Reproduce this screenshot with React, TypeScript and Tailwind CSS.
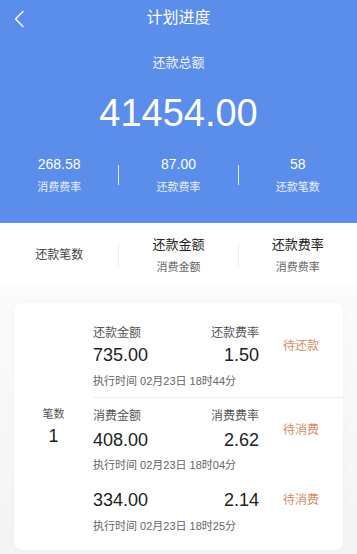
import React from "react";

const FONT = { fontFamily: '"Liberation Sans", "Noto Sans CJK SC", sans-serif' };

function StatCol({ value, label }: { value: string; label: string }) {
  return (
    <div className="flex flex-1 flex-col items-center">
      <div className="text-[14px] leading-[20px] text-white">{value}</div>
      <div className="mt-[5px] text-[11px] leading-[16px] text-[#e8efff]">{label}</div>
    </div>
  );
}

function Row({
  labels,
  amount,
  rate,
  status,
  time,
  valueMt,
  timeMt,
}: {
  labels?: [string, string];
  amount: string;
  rate: string;
  status: string;
  time: string;
  valueMt: string;
  timeMt: string;
}) {
  return (
    <div>
      <div className="flex items-center">
        <div className="flex flex-1">
          <div className="flex flex-1 flex-col">
            {labels && <div className="text-[12px] leading-[16px] text-[#555]">{labels[0]}</div>}
            <div className={`${valueMt} text-[18px] leading-[24px] text-[#222]`}>{amount}</div>
          </div>
          <div className="flex flex-col items-end">
            {labels && <div className="text-[12px] leading-[16px] text-[#555]">{labels[1]}</div>}
            <div className={`${valueMt} text-[18px] leading-[24px] text-[#222]`}>{rate}</div>
          </div>
        </div>
        <div className="w-[84px] text-center text-[12px] leading-[16px] text-[#d98b5f]">{status}</div>
      </div>
      <div className={`${timeMt} text-[11px] leading-[16px] text-[#666]`}>{time}</div>
    </div>
  );
}

export default function App() {
  return (
    <div className="min-h-[554px] w-[357px] bg-[#f5f5f5]" style={FONT}>
      <div className="h-[223px] bg-[#5b8deb]">
        <div className="grid h-[36px] grid-cols-[40px_1fr_40px] items-center">
          <div className="flex items-center pl-[13px] pt-[1px]">
            <svg width="12" height="18" viewBox="0 0 12 18" fill="none">
              <path d="M10 1.5 L2.5 9 L10 16.5" stroke="white" strokeWidth="1.4" strokeLinecap="round" strokeLinejoin="round" />
            </svg>
          </div>
          <div className="text-center text-[16px] leading-[22px] text-white">计划进度</div>
          <div />
        </div>
        <div className="mt-[18px] text-center text-[13px] leading-[18px] text-[#eef3ff]">还款总额</div>
        <div className="mt-[19px] text-center text-[38px] leading-[44px] text-white">41454.00</div>
        <div className="mt-[19px] flex items-start">
          <StatCol value="268.58" label="消费费率" />
          <div className="mt-[11px] h-[20px] w-px bg-[#dfe8fb]" />
          <StatCol value="87.00" label="还款费率" />
          <div className="mt-[11px] h-[20px] w-px bg-[#dfe8fb]" />
          <StatCol value="58" label="还款笔数" />
        </div>
      </div>

      <div className="flex h-[64px] items-center bg-white">
        <div className="flex flex-1 justify-center text-[12px] leading-[16px] text-[#444]">还款笔数</div>
        <div className="h-[22px] w-px bg-[#eeeeee]" />
        <div className="flex flex-1 flex-col items-center">
          <div className="text-[13px] leading-[18px] text-[#222]">还款金额</div>
          <div className="mt-[5px] text-[11px] leading-[16px] text-[#666]">消费金额</div>
        </div>
        <div className="h-[22px] w-px bg-[#eeeeee]" />
        <div className="flex flex-1 flex-col items-center">
          <div className="text-[13px] leading-[18px] text-[#222]">还款费率</div>
          <div className="mt-[5px] text-[11px] leading-[16px] text-[#666]">消费费率</div>
        </div>
      </div>

      <div className="bg-gradient-to-b from-[#fbfbfb] to-[#f4f4f4] px-[14px] pb-[2px] pt-[16px]">
        <div className="flex rounded-[8px] bg-white shadow-[0_0_6px_rgba(0,0,0,0.03)]">
          <div className="flex w-[79px] flex-col items-center justify-center">
            <div className="text-[11px] leading-[16px] text-[#555]">笔数</div>
            <div className="mt-[2px] text-[18px] leading-[24px] text-[#222]">1</div>
          </div>
          <div className="flex flex-1 flex-col pb-[16px] pt-[22px]">
            <Row
              labels={["还款金额", "还款费率"]}
              amount="735.00"
              rate="1.50"
              status="待还款"
              time="执行时间 02月23日 18时44分"
              valueMt="mt-[2px]"
              timeMt="mt-[6px]"
            />
            <div className="mt-[8px] h-px bg-[#eeeeee]" />
            <div className="pt-[10px]">
              <Row
                labels={["消费金额", "消费费率"]}
                amount="408.00"
                rate="2.62"
                status="待消费"
                time="执行时间 02月23日 18时04分"
                valueMt="mt-[4px]"
                timeMt="mt-[5px]"
              />
            </div>
            <div className="mt-[15px]">
              <Row
                amount="334.00"
                rate="2.14"
                status="待消费"
                time="执行时间 02月23日 18时25分"
                valueMt="mt-0"
                timeMt="mt-[6px]"
              />
            </div>
          </div>
        </div>
      </div>
    </div>
  );
}
